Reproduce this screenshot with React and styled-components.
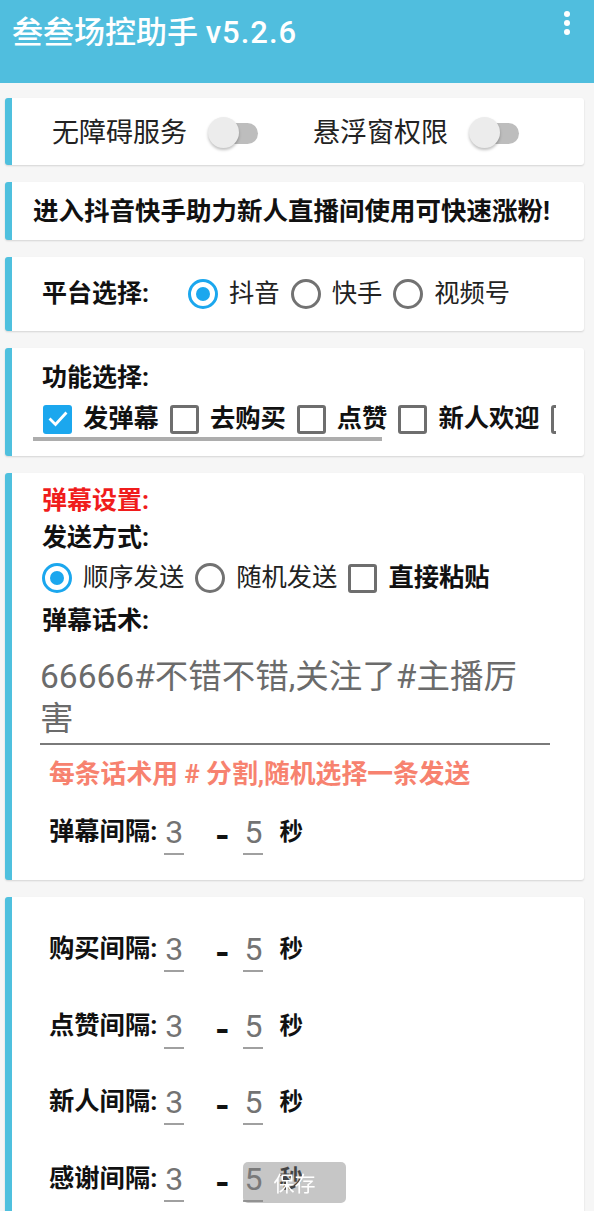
import React from "react";
import styled, { createGlobalStyle } from "styled-components";

const Global = createGlobalStyle`
  html, body { margin: 0; padding: 0; }
  body {
    background: #f6f6f6;
    font-family: "Roboto", "Noto Sans CJK SC", sans-serif;
    color: #1a1a1a;
    overflow: hidden;
  }
  * { box-sizing: border-box; }
`;

const Page = styled.div`
  width: 594px;
  min-height: 1211px;
  position: relative;
`;

const Header = styled.header`
  height: 83px;
  background: #50bede;
  display: flex;
  align-items: flex-start;
  padding: 14px 23px 0 12px;
`;

const Title = styled.h1`
  margin: 0;
  color: #ffffff;
  font-size: 31px;
  font-weight: 500;
  line-height: 38px;
  white-space: nowrap;
`;

const Version = styled.span`
  letter-spacing: 1px;
`;

const MenuDots = styled.svg`
  margin-left: auto;
  margin-top: -5px;
  width: 8px;
  height: 28px;
`;

const Main = styled.main`
  display: flex;
  flex-direction: column;
  gap: 17px;
  padding: 15px 10px 0 5px;
`;

const Card = styled.section`
  background: #ffffff;
  border-left: 7px solid #4fc0de;
  border-radius: 3px;
  box-shadow: 0 1px 2px rgba(0, 0, 0, 0.14);
  display: flex;
  flex-direction: ${(p) => (p.$column ? "column" : "row")};
  align-items: ${(p) => (p.$column ? "stretch" : "center")};
  height: ${(p) => (p.$h ? `${p.$h}px` : "auto")};
  padding: ${(p) => p.$pad || "0"};
`;

const PermLabel = styled.span`
  font-size: 27px;
  line-height: 36px;
  color: #222;
  margin-left: ${(p) => p.$ml || 0}px;
  margin-top: 3px;
`;

const SwitchBox = styled.span`
  position: relative;
  width: 50px;
  height: 32px;
  display: inline-flex;
  align-items: center;
  margin-left: 21px;
  margin-top: 3px;
`;

const Track = styled.span`
  margin-left: 10px;
  width: 40px;
  height: 21px;
  border-radius: 11px;
  background: #bdbdbd;
`;

const Thumb = styled.span`
  position: absolute;
  left: 0;
  top: 0;
  width: 31px;
  height: 31px;
  border-radius: 50%;
  background: #ececec;
  box-shadow: 0 2px 3px rgba(0, 0, 0, 0.25);
`;

const Notice = styled.p`
  margin: 0 0 0 21px;
  font-size: 25.5px;
  font-weight: 700;
  line-height: 36px;
  color: #111;
  white-space: nowrap;
`;

const Label = styled.div`
  font-size: 25px;
  font-weight: 700;
  line-height: 32px;
  color: ${(p) => p.$color || "#111"};
  margin-top: ${(p) => p.$mt || 0}px;
  white-space: nowrap;
`;

const Row = styled.div`
  display: flex;
  align-items: center;
  height: ${(p) => p.$h || 36}px;
  margin-top: ${(p) => p.$mt || 0}px;
  margin-left: ${(p) => p.$ml || 0}px;
`;

const Options = styled.div`
  display: flex;
  align-items: center;
  margin-left: ${(p) => p.$ml || 0}px;
  white-space: nowrap;
`;

const RadioCircle = styled.span`
  flex: none;
  width: 30px;
  height: 30px;
  border-radius: 50%;
  border: 3px solid ${(p) => (p.$on ? "#1ba7ee" : "#727272")};
  display: inline-flex;
  align-items: center;
  justify-content: center;
  &::after {
    content: "";
    width: 14px;
    height: 14px;
    border-radius: 50%;
    background: ${(p) => (p.$on ? "#1ba7ee" : "transparent")};
  }
`;

const OptText = styled.span`
  font-size: 25.3px;
  line-height: 32px;
  font-weight: ${(p) => (p.$bold ? 700 : 400)};
  color: ${(p) => (p.$bold ? "#111" : "#222")};
  margin: 0 11px 0 11px;
`;

const Box = styled.span`
  flex: none;
  width: 29px;
  height: 29px;
  border-radius: 3px;
  border: ${(p) => (p.$on ? "none" : "3px solid #6e6e6e")};
  background: ${(p) => (p.$on ? "#1ba7ee" : "transparent")};
  display: inline-flex;
  align-items: center;
  justify-content: center;
`;

const ScrollArea = styled.div`
  margin-left: 21px;
  width: 523px;
  overflow: hidden;
  margin-top: 7px;
`;

const ScrollRow = styled.div`
  display: flex;
  align-items: center;
  height: 36px;
  padding-left: 10px;
  white-space: nowrap;
`;

const ScrollThumb = styled.div`
  width: 349px;
  height: 4px;
  background: #adadad;
`;

const TextArea = styled.div`
  margin: 19px 0 0 -2px;
  width: 510px;
  padding: 0 14px 3px 0;
  border-bottom: 2px solid #7a7a7a;
  font-size: 33.5px;
  line-height: 42px;
  color: #6b6b6b;
`;

const Hint = styled.div`
  margin: 13px 0 0 7px;
  font-size: 25.8px;
  font-weight: 700;
  line-height: 32px;
  color: #f7826f;
  white-space: nowrap;
`;

const IntervalList = styled.div`
  display: flex;
  flex-direction: column;
  gap: 35.5px;
  margin-top: ${(p) => p.$mt || 0}px;
`;

const IntervalRow = styled.div`
  display: flex;
  align-items: flex-start;
  margin-left: 7px;
`;

const IntervalLabel = styled.span`
  font-size: 25.3px;
  font-weight: 700;
  line-height: 36px;
  color: #111;
  white-space: nowrap;
`;

const NumField = styled.span`
  display: inline-flex;
  flex-direction: column;
  align-items: center;
  width: 20px;
  margin-left: ${(p) => p.$ml}px;
`;

const NumText = styled.span`
  font-family: "Roboto", sans-serif;
  font-size: 32px;
  font-weight: 400;
  line-height: 36px;
  color: #737373;
`;

const NumLine = styled.span`
  margin-top: 3px;
  width: 20px;
  height: 2px;
  background: #a0a0a0;
`;

const Dash = styled.span`
  font-family: "Noto Sans CJK SC", sans-serif;
  font-size: 38px;
  font-weight: 700;
  line-height: 36px;
  color: #111;
  margin-left: 31px;
`;

const Unit = styled.span`
  font-size: 23.5px;
  font-weight: 700;
  line-height: 36px;
  color: #111;
  margin-left: 16px;
`;

const SaveButton = styled.button`
  position: fixed;
  left: 243px;
  bottom: 8px;
  width: 103px;
  height: 41px;
  border: none;
  border-radius: 5px;
  background: rgba(128, 128, 128, 0.45);
  color: #ffffff;
  font-family: "Noto Sans CJK SC", sans-serif;
  font-size: 21px;
  line-height: 41px;
  padding: 0;
`;

function Switch() {
  return (
    <SwitchBox>
      <Track />
      <Thumb />
    </SwitchBox>
  );
}

function Radio({ on, children, bold }) {
  return (
    <>
      <RadioCircle $on={on} />
      <OptText $bold={bold}>{children}</OptText>
    </>
  );
}

function Check({ on, children, bold = true }) {
  return (
    <>
      <Box $on={on}>
        {on && (
          <svg width="22" height="22" viewBox="0 0 22 22">
            <path
              d="M3.5 11.5 L8.5 16.5 L18.5 5.5"
              fill="none"
              stroke="#fff"
              strokeWidth="2.8"
              strokeLinecap="square"
            />
          </svg>
        )}
      </Box>
      {children && <OptText $bold={bold}>{children}</OptText>}
    </>
  );
}

function Interval({ label }) {
  return (
    <IntervalRow>
      <IntervalLabel>{label}</IntervalLabel>
      <NumField $ml={7}>
        <NumText>3</NumText>
        <NumLine />
      </NumField>
      <Dash>-</Dash>
      <NumField $ml={14}>
        <NumText>5</NumText>
        <NumLine />
      </NumField>
      <Unit>秒</Unit>
    </IntervalRow>
  );
}

export default function App() {
  return (
    <Page>
      <Global />
      <Header>
        <Title>
          叁叁场控助手 <Version>v5.2.6</Version>
        </Title>
        <MenuDots viewBox="0 0 8 28">
          <circle cx="4" cy="5" r="3" fill="#fff" />
          <circle cx="4" cy="14" r="3" fill="#fff" />
          <circle cx="4" cy="23" r="3" fill="#fff" />
        </MenuDots>
      </Header>
      <Main>
        <Card $h={67}>
          <PermLabel $ml={40}>无障碍服务</PermLabel>
          <Switch />
          <PermLabel $ml={55}>悬浮窗权限</PermLabel>
          <Switch />
        </Card>

        <Card $h={58}>
          <Notice>进入抖音快手助力新人直播间使用可快速涨粉!</Notice>
        </Card>

        <Card $h={74} $pad="0 0 0 30px">
          <Label>平台选择:</Label>
          <Options $ml={39}>
            <Radio on>抖音</Radio>
            <Radio>快手</Radio>
            <Radio>视频号</Radio>
          </Options>
        </Card>

        <Card $column $pad="14px 0 15px 0">
          <Row $ml={30} $h={32}>
            <Label>功能选择:</Label>
          </Row>
          <ScrollArea>
            <ScrollRow>
              <Check on>发弹幕</Check>
              <Check>去购买</Check>
              <Check>点赞</Check>
              <Check>新人欢迎</Check>
              <Check>感谢关注</Check>
            </ScrollRow>
            <ScrollThumb />
          </ScrollArea>
        </Card>

        <Card $column $pad="12px 0 25px 30px">
          <Label $color="#f01c1c">弹幕设置:</Label>
          <Label $mt={5}>发送方式:</Label>
          <Row $mt={6}>
            <Radio on>顺序发送</Radio>
            <Radio>随机发送</Radio>
            <Check bold>直接粘贴</Check>
          </Row>
          <Label $mt={9}>弹幕话术:</Label>
          <TextArea>66666#不错不错,关注了#主播厉害</TextArea>
          <Hint>每条话术用 # 分割,随机选择一条发送</Hint>
          <IntervalList $mt={24}>
            <Interval label="弹幕间隔:" />
          </IntervalList>
        </Card>

        <Card $column $pad="34px 0 40px 30px">
          <IntervalList>
            <Interval label="购买间隔:" />
            <Interval label="点赞间隔:" />
            <Interval label="新人间隔:" />
            <Interval label="感谢间隔:" />
          </IntervalList>
        </Card>
      </Main>
      <SaveButton>保存</SaveButton>
    </Page>
  );
}
